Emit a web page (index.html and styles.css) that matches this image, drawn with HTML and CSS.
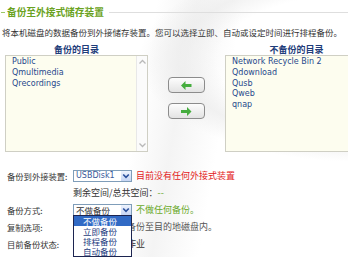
FILE: index.html
```html
<!DOCTYPE html>
<html lang="zh-CN">
  <head>
    <meta charset="UTF-8" />
    <meta name="viewport" content="width=device-width, initial-scale=1.0" />
    <title>备份至外接式储存装置</title>
    <link rel="stylesheet" href="styles.css">
  </head>
  <body>
    <div class="page">
      <div class="legend">
        <span class="dash"></span>
        <h1>备份至外接式储存装置</h1>
        <span class="rule"></span>
      </div>
      <p class="desc">将本机磁盘的数据备份到外接储存装置。您可以选择立即、自动或设定时间进行排程备份。</p>

      <div class="lists">
        <div class="col">
          <h2>备份的目录</h2>
          <div class="listbox">
            <ul class="items">
              <li>Public</li>
              <li>Qmultimedia</li>
              <li>Qrecordings</li>
            </ul>
            <div class="scroll">
              <svg width="9" height="6" viewBox="0 0 9 6"><path d="M1.5 4.5 L4.5 1.5 L7.5 4.5" fill="none" stroke="#b9b9b9" stroke-width="1.3"/></svg>
              <svg width="9" height="6" viewBox="0 0 9 6"><path d="M1.5 1.5 L4.5 4.5 L7.5 1.5" fill="none" stroke="#b9b9b9" stroke-width="1.3"/></svg>
            </div>
          </div>
        </div>

        <div class="mover">
          <button>
            <svg width="11" height="9" viewBox="0 0 11 9"><polygon points="0,4.5 4.5,0 4.5,3 10.5,3 10.5,6 4.5,6 4.5,9" fill="#45ad3e"/></svg>
          </button>
          <button>
            <svg width="11" height="9" viewBox="0 0 11 9"><polygon points="10.5,4.5 6,0 6,3 0,3 0,6 6,6 6,9" fill="#45ad3e"/></svg>
          </button>
        </div>

        <div class="col right">
          <h2>不备份的目录</h2>
          <div class="listbox">
            <ul class="items">
              <li>Network Recycle Bin 2</li>
              <li>Qdownload</li>
              <li>Qusb</li>
              <li>Qweb</li>
              <li>qnap</li>
            </ul>
          </div>
        </div>
      </div>

      <div class="form">
        <div class="row">
          <span class="label">备份到外接装置:</span>
          <div class="select">
            <span class="latin">USBDisk1</span>
            <i class="btn"><svg width="8" height="6" viewBox="0 0 8 6"><path d="M1.2 1.5 L4 4.3 L6.8 1.5" fill="none" stroke="#2a4f9c" stroke-width="1.6"/></svg></i>
          </div>
          <span class="note red">目前没有任何外接式装置</span>
        </div>
        <div class="row">
          <span class="label"></span>
          <span>剩余空间/总共空间：<b class="green">--</b></span>
        </div>
        <div class="row">
          <span class="label">备份方式:</span>
          <div class="select">
            <span>不做备份</span>
            <i class="btn"><svg width="8" height="6" viewBox="0 0 8 6"><path d="M1.2 1.5 L4 4.3 L6.8 1.5" fill="none" stroke="#2a4f9c" stroke-width="1.6"/></svg></i>
          </div>
          <span class="note green">不做任何备份。</span>
        </div>
        <div class="row">
          <span class="label">复制选项:</span>
          <span class="gray">仅复制新数据备份至目的地磁盘内。</span>
        </div>
        <div class="row">
          <span class="label">目前备份状态:</span>
          <span>目前没有任何作业</span>
        </div>
      </div>

      <ul class="dropdown">
        <li class="on">不做备份</li>
        <li>立即备份</li>
        <li>排程备份</li>
        <li>自动备份</li>
      </ul>
    </div>
  </body>
</html>
```

FILE: styles.css
```css
* {
  margin: 0;
  padding: 0;
  box-sizing: border-box;
}
body {
  width: 348px;
  height: 257px;
  overflow: hidden;
  background: #fff;
  font-family: "Noto Sans CJK SC", sans-serif;
  color: #333;
}
.page {
  position: relative;
  width: 348px;
  height: 257px;
  overflow: hidden;
  padding-top: 5px;
  background:
    radial-gradient(ellipse 260px 120px at 360px 60px, rgba(255,255,255,0) 55%, rgba(236,236,236,0.7) 70%, rgba(255,255,255,0) 85%),
    linear-gradient(100deg, #fff 40%, #f4f4f4 50%, #fff 62%);
}
.legend {
  display: flex;
  align-items: center;
  height: 14px;
}
.legend .dash {
  width: 4px;
  height: 1px;
  background: #9cc865;
  margin: 0 2px 0 1px;
}
.legend h1 {
  font-size: 9.7px;
  line-height: 14px;
  font-weight: bold;
  color: #6aa221;
  white-space: nowrap;
}
.legend .rule {
  flex: 1;
  height: 1px;
  background: #dedede;
  margin-left: 5px;
}
.desc {
  margin: 7px 0 0 2px;
  font-size: 8.5px;
  line-height: 12px;
  white-space: nowrap;
  color: #333;
}
.lists {
  display: flex;
  margin-top: 6px;
  padding-left: 5px;
  overflow: hidden;
}
.col {
  width: 143px;
  flex: none;
}
.col h2 {
  font-size: 9px;
  line-height: 11px;
  text-align: center;
  font-weight: bold;
  color: #1f3d7a;
}
.listbox {
  height: 97px;
  display: flex;
  border: 1px solid #cfcfc4;
  background: #fdfdef;
}
.items {
  flex: 1;
  list-style: none;
  padding: 1px 0 0 6px;
  font-family: "DejaVu Sans", sans-serif;
  font-size: 8px;
  line-height: 10.8px;
  color: #27498c;
  white-space: nowrap;
}
.scroll {
  width: 11px;
  display: flex;
  flex-direction: column;
  justify-content: space-between;
  align-items: center;
  padding: 3px 0;
  border-left: 1px solid #e8e8e8;
  background: #fbfbfb;
}
.mover {
  width: 77px;
  flex: none;
  display: flex;
  flex-direction: column;
  align-items: center;
  gap: 10px;
  padding-top: 33px;
}
.mover button {
  width: 37px;
  height: 16px;
  display: flex;
  align-items: center;
  justify-content: center;
  border: 1px solid #8c8c8c;
  border-radius: 4px;
  background: linear-gradient(#fdfdfd, #e3e3e3);
}
.form {
  margin-top: 15px;
  padding-left: 7px;
}
.row {
  display: flex;
  align-items: center;
  height: 17px;
  font-size: 9px;
  white-space: nowrap;
}
.label {
  width: 66px;
  flex: none;
  font-size: 8.3px;
}
.select {
  width: 59px;
  height: 12px;
  display: flex;
  align-items: center;
  border: 1px solid #7f9db9;
  background: #fff;
  font-size: 8.5px;
}
.select span {
  flex: 1;
  padding-left: 2px;
  line-height: 10px;
}
.select .latin {
  font-family: "DejaVu Sans", sans-serif;
  font-size: 8px;
  color: #3a5a9a;
}
.select .btn {
  width: 10px;
  height: 10px;
  display: flex;
  align-items: center;
  justify-content: center;
  background: linear-gradient(#eef3fd, #c6d5f4);
}
.note {
  margin-left: 4px;
}
.red {
  color: #e3201b;
}
.green {
  color: #6aa92a;
  font-weight: normal;
}
.gray {
  color: #555;
}
.dropdown {
  position: absolute;
  left: 73px;
  top: 215px;
  width: 59px;
  list-style: none;
  border: 1px solid #1c2450;
  background: #fff;
  font-size: 8.5px;
}
.dropdown li {
  height: 10px;
  line-height: 10px;
  padding-left: 9px;
  color: #1e3c80;
}
.dropdown .on {
  background: #316ac5;
  color: #fff;
}
```
